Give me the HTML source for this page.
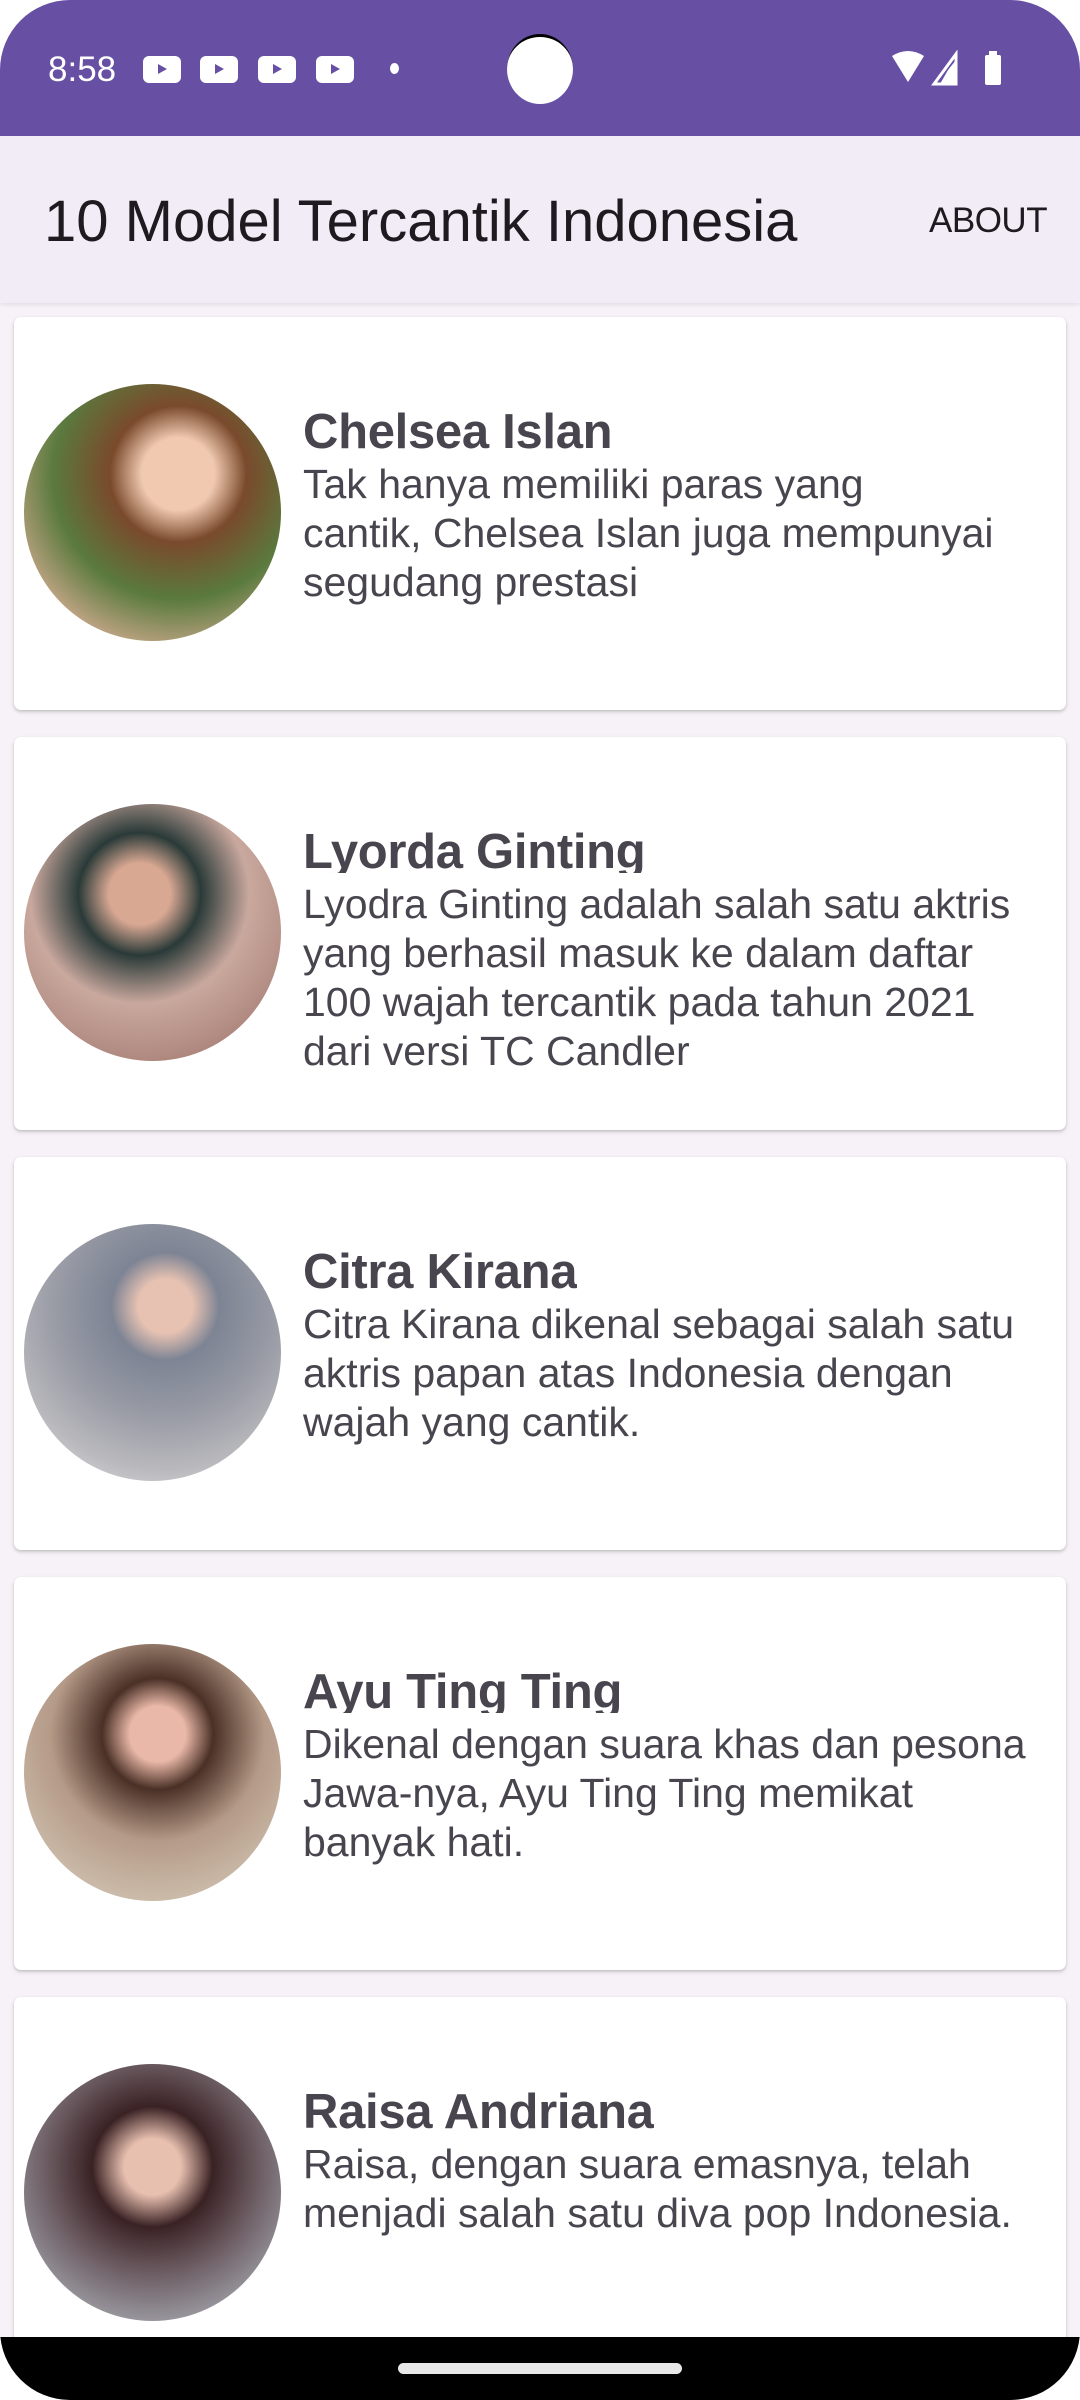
<!DOCTYPE html>
<html><head><meta charset="utf-8"><style>
*{margin:0;padding:0;box-sizing:border-box}
html,body{width:1080px;height:2400px;overflow:hidden;background:#fff}
body{position:relative;font-family:"Liberation Sans",sans-serif}
.screen{position:absolute;left:0;top:0;width:1080px;height:2400px;border-radius:70px;overflow:hidden;background:#f6f2f7}
.status{position:absolute;left:0;top:0;width:1080px;height:136px;background:#6750a4}
.appbar{position:absolute;left:0;top:136px;width:1080px;height:167px;background:#f2ecf6;box-shadow:0 2px 4px rgba(0,0,0,.08)}
.title{position:absolute;left:44px;top:193px;font-size:58px;line-height:58px;color:#1d1b20;letter-spacing:0;white-space:nowrap}
.about{position:absolute;left:929px;top:203px;font-size:35px;line-height:35px;color:#1d1b20;font-weight:500;letter-spacing:-0.5px}
.card{position:absolute;left:14px;width:1052px;height:393px;background:#fff;border-radius:7px;box-shadow:0 2px 4px rgba(0,0,0,.15),0 1px 2px rgba(0,0,0,.1)}
.pic{position:absolute;left:10px;top:67px;width:257px;height:257px;border-radius:50%}
.name{position:absolute;left:289px;top:91px;height:45px;overflow:hidden;font-size:49px;line-height:49px;font-weight:bold;color:#49454f;white-space:nowrap;letter-spacing:-0.3px}
.desc{position:absolute;left:289px;top:143px;height:188px;overflow:hidden;font-size:41px;line-height:49px;color:#49454f;white-space:nowrap;letter-spacing:0}
.nav{position:absolute;left:0;top:2337px;width:1080px;height:63px;background:#000}
.handle{position:absolute;left:398px;top:2363px;width:284px;height:11px;border-radius:6px;background:#e8e8e8}
.yt{position:absolute;top:56px;width:38px;height:27px;background:#fff;border-radius:6px}
.yt:after{content:"";position:absolute;left:15px;top:8px;border-left:9px solid #6750a4;border-top:5.5px solid transparent;border-bottom:5.5px solid transparent}
</style></head><body>
<div class="screen">
<div class="status">
 <div style="position:absolute;left:48px;top:50px;font-size:35px;line-height:40px;color:#fff;letter-spacing:0">8:58</div>
 <div class="yt" style="left:143px"></div>
 <div class="yt" style="left:200px"></div>
 <div class="yt" style="left:258px"></div>
 <div class="yt" style="left:316px"></div>
 <div style="position:absolute;left:390px;top:63px;width:9px;height:11px;border-radius:50%;background:#fff"></div>
 <div style="position:absolute;left:507px;top:34px;width:66px;height:70px;border-radius:50%;background:#fff;border-top:3px solid #000"></div>
 <svg style="position:absolute;left:890px;top:50px" width="120" height="40" viewBox="0 0 120 40">
  <path d="M2 6 Q 18 -4 34 6 L18 32 Z" fill="#fff"/>
  <path d="M44 34 L66 4 L66 34 Z" fill="none" stroke="#fff" stroke-width="3"/>
  <path d="M58 20 L66 10 L66 34 L50 34 Z" fill="#fff"/>
  <rect x="95" y="5" width="16" height="30" rx="2" fill="#fff"/>
  <rect x="99" y="1" width="8" height="5" fill="#fff"/>
 </svg>
</div>
<div class="appbar"></div>
<div class="title">10 Model Tercantik Indonesia</div>
<div class="about">ABOUT</div>

<div class="card" style="top:317px">
 <div class="pic" style="background:radial-gradient(circle at 60% 35%,#f0c9b0 0 16%,#7a4a2c 30%,#5a7a3e 55%,#c9a88a 80%,#e0d0c8 100%)"></div>
 <div class="name">Chelsea Islan</div>
 <div class="desc">Tak hanya memiliki paras yang<br>cantik, Chelsea Islan juga mempunyai<br>segudang prestasi</div>
</div>
<div class="card" style="top:737px">
 <div class="pic" style="background:radial-gradient(circle at 45% 35%,#d9a893 0 14%,#2a3a38 28%,#c9a89e 50%,#b08a80 75%,#8a5a48 100%)"></div>
 <div class="name">Lyorda Ginting</div>
 <div class="desc">Lyodra Ginting adalah salah satu aktris<br>yang berhasil masuk ke dalam daftar<br>100 wajah tercantik pada tahun 2021<br>dari versi TC Candler</div>
</div>
<div class="card" style="top:1157px">
 <div class="pic" style="background:radial-gradient(circle at 55% 32%,#e7c2b2 0 12%,#7d8494 24%,#9a9ca6 50%,#b8b8bc 72%,#e8e6e6 100%)"></div>
 <div class="name">Citra Kirana</div>
 <div class="desc">Citra Kirana dikenal sebagai salah satu<br>aktris papan atas Indonesia dengan<br>wajah yang cantik.</div>
</div>
<div class="card" style="top:1577px">
 <div class="pic" style="background:radial-gradient(circle at 52% 35%,#e9b8a8 0 13%,#4a3026 26%,#b59a88 50%,#c9b8a6 75%,#d6cbbf 100%)"></div>
 <div class="name">Ayu Ting Ting</div>
 <div class="desc">Dikenal dengan suara khas dan pesona<br>Jawa-nya, Ayu Ting Ting memikat<br>banyak hati.</div>
</div>
<div class="card" style="top:1997px">
 <div class="pic" style="background:radial-gradient(circle at 50% 40%,#e8c0b0 0 14%,#3a2224 30%,#6a5a60 52%,#9a98a0 78%,#b8b6bc 100%)"></div>
 <div class="name">Raisa Andriana</div>
 <div class="desc">Raisa, dengan suara emasnya, telah<br>menjadi salah satu diva pop Indonesia.</div>
</div>

<div class="nav"></div>
<div class="handle"></div>
</div>
</body></html>
